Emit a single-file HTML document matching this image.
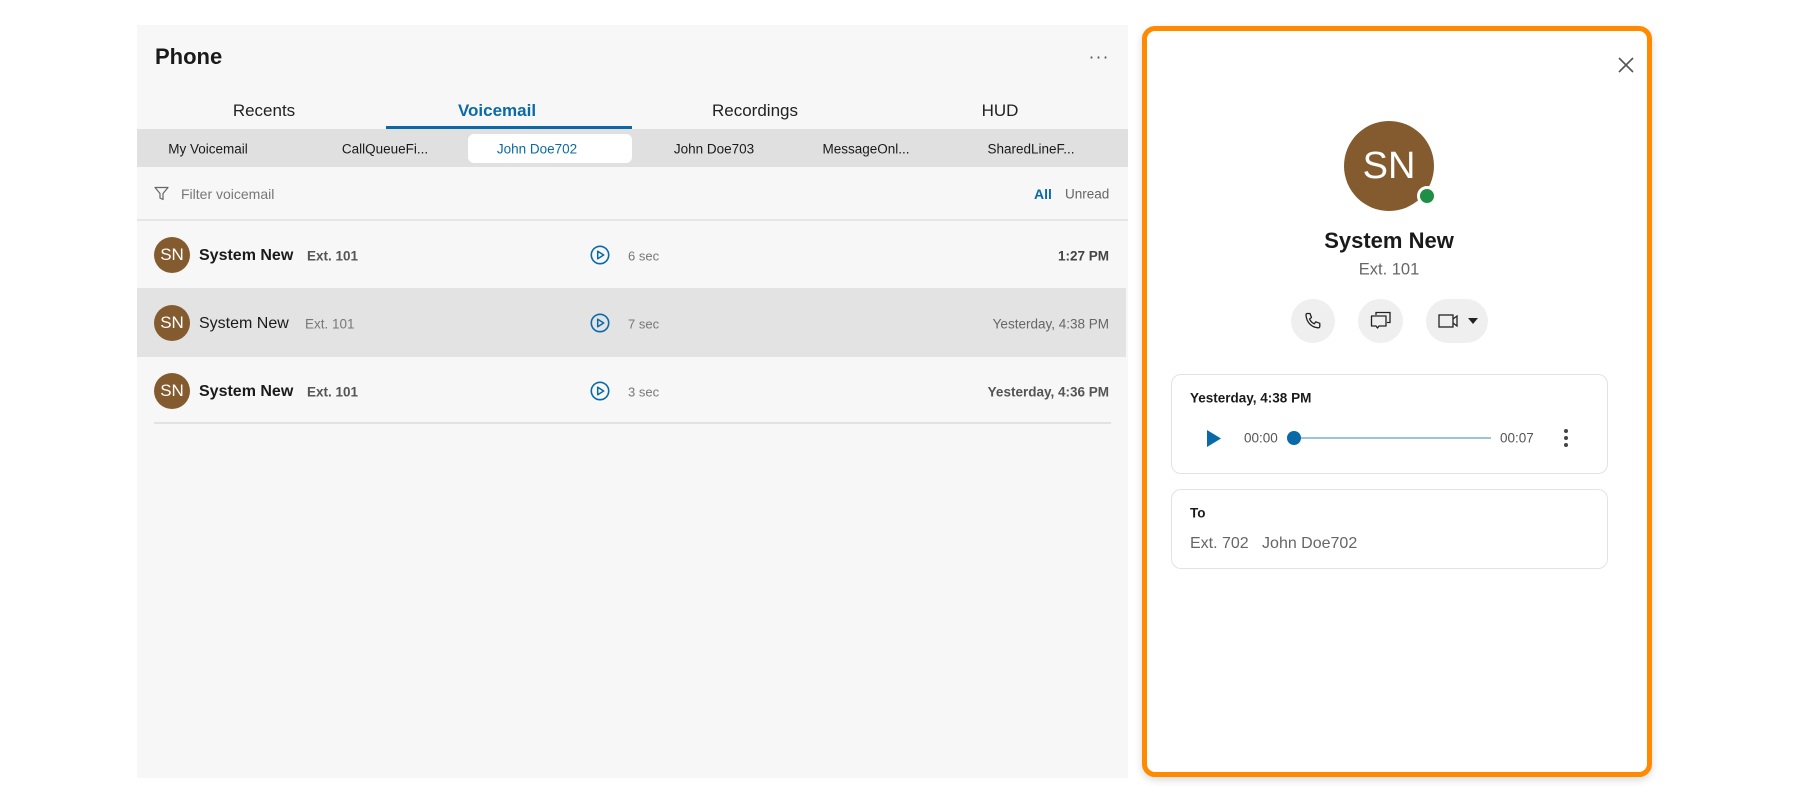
<!DOCTYPE html>
<html><head><meta charset="utf-8"><style>
*{margin:0;padding:0;box-sizing:border-box}
body{width:1800px;height:801px;background:#fff;font-family:"Liberation Sans",sans-serif;position:relative;overflow:hidden;color:#1a1a1a}
.a{position:absolute;white-space:nowrap}
.left{position:absolute;left:137px;top:25px;width:991px;height:753px;background:#f7f7f7}
.av{position:absolute;width:36px;height:36px;border-radius:50%;background:#845b2e;color:#fff;font-size:17px;text-align:center;line-height:36px}
.c{transform:translate(-50%,-50%)}
.vl{transform:translateY(-50%)}
</style></head><body>
<div class="left"></div>
<div class="a vl" style="left:155px;top:57px;font-size:22px;font-weight:bold">Phone</div>
<div class="a c" style="left:1099px;top:57px;font-size:18px;color:#555;letter-spacing:1px">···</div>
<div class="a c" style="left:264px;top:111px;font-size:17px;color:#222">Recents</div>
<div class="a c" style="left:497px;top:111px;font-size:17px;color:#0a6aa8;font-weight:bold">Voicemail</div>
<div class="a c" style="left:755px;top:111px;font-size:17px;color:#222">Recordings</div>
<div class="a c" style="left:1000px;top:111px;font-size:17px;color:#222">HUD</div>
<div class="a" style="left:386px;top:126px;width:246px;height:3px;background:#0a6aa8"></div>
<div class="a" style="left:137px;top:129px;width:991px;height:38px;background:#e0e0e0"></div>
<div class="a" style="left:468px;top:134px;width:164px;height:29px;background:#fff;border-radius:6px"></div>
<div class="a c" style="left:208px;top:149px;font-size:13.5px">My Voicemail</div>
<div class="a c" style="left:385px;top:149px;font-size:13.5px">CallQueueFi...</div>
<div class="a c" style="left:537px;top:149px;font-size:13.5px;color:#0a6aa8">John Doe702</div>
<div class="a c" style="left:714px;top:149px;font-size:13.5px">John Doe703</div>
<div class="a c" style="left:866px;top:149px;font-size:13.5px">MessageOnl...</div>
<div class="a c" style="left:1031px;top:149px;font-size:13.5px">SharedLineF...</div>
<svg class="a" style="left:154px;top:186px" width="15" height="15" viewBox="0 0 15 15"><path d="M1 1.5h13l-5 6v6l-3-1.5v-4.5z" fill="none" stroke="#666" stroke-width="1.2" stroke-linejoin="round"/></svg>
<div class="a vl" style="left:181px;top:194px;font-size:14px;color:#777">Filter voicemail</div>
<div class="a vl" style="left:1034px;top:194px;font-size:14px;color:#0a6aa8;font-weight:bold">All</div>
<div class="a vl" style="left:1065px;top:194px;font-size:13.5px;color:#666">Unread</div>
<div class="a" style="left:137px;top:219px;width:991px;height:2px;background:#e6e6e6"></div>
<div class="a" style="left:137px;top:288px;width:989px;height:69px;background:#e3e3e3"></div>
<div class="a" style="left:154px;top:422px;width:957px;height:2px;background:#e2e2e2"></div>

<div class="av c" style="left:172px;top:255px">SN</div>
<div class="a vl" style="left:199px;top:256px;font-size:16px;font-weight:bold">System New</div>
<div class="a vl" style="left:307px;top:256px;font-size:13.5px;font-weight:bold;color:#555">Ext. 101</div>
<div class="av c" style="left:172px;top:323px">SN</div>
<div class="a vl" style="left:199px;top:324px;font-size:16px">System New</div>
<div class="a vl" style="left:305px;top:324px;font-size:13.5px;color:#777">Ext. 101</div>
<div class="av c" style="left:172px;top:391px">SN</div>
<div class="a vl" style="left:199px;top:392px;font-size:16px;font-weight:bold">System New</div>
<div class="a vl" style="left:307px;top:392px;font-size:13.5px;font-weight:bold;color:#555">Ext. 101</div>

<svg class="a" style="left:590px;top:245px" width="20" height="20" viewBox="0 0 20 20"><circle cx="10" cy="10" r="8.7" fill="none" stroke="#0a6aa8" stroke-width="1.6"/><path d="M7.7 6.2v7.6l6-3.8z" fill="none" stroke="#0a6aa8" stroke-width="1.5" stroke-linejoin="round"/></svg>
<svg class="a" style="left:590px;top:313px" width="20" height="20" viewBox="0 0 20 20"><circle cx="10" cy="10" r="8.7" fill="none" stroke="#0a6aa8" stroke-width="1.6"/><path d="M7.7 6.2v7.6l6-3.8z" fill="none" stroke="#0a6aa8" stroke-width="1.5" stroke-linejoin="round"/></svg>
<svg class="a" style="left:590px;top:381px" width="20" height="20" viewBox="0 0 20 20"><circle cx="10" cy="10" r="8.7" fill="none" stroke="#0a6aa8" stroke-width="1.6"/><path d="M7.7 6.2v7.6l6-3.8z" fill="none" stroke="#0a6aa8" stroke-width="1.5" stroke-linejoin="round"/></svg>
<div class="a vl" style="left:628px;top:256px;font-size:13px;color:#777">6 sec</div>
<div class="a vl" style="left:628px;top:324px;font-size:13px;color:#777">7 sec</div>
<div class="a vl" style="left:628px;top:392px;font-size:13px;color:#777">3 sec</div>
<div class="a vl" style="right:691px;top:256px;font-size:13.5px;font-weight:bold;color:#444">1:27 PM</div>
<div class="a vl" style="right:691px;top:324px;font-size:13.5px;color:#666">Yesterday, 4:38 PM</div>
<div class="a vl" style="right:691px;top:392px;font-size:13.5px;font-weight:bold;color:#555">Yesterday, 4:36 PM</div>

<div class="a" style="left:1142px;top:26px;width:510px;height:751px;border:5px solid #ff8a00;border-radius:13px;background:#fff;box-shadow:0 3px 8px rgba(0,0,0,.15)"></div>
<svg class="a" style="left:1617px;top:56px" width="18" height="18" viewBox="0 0 18 18"><path d="M2 2l14 14M16 2L2 16" stroke="#555" stroke-width="1.6"/></svg>
<div class="a c" style="left:1389px;top:166px;width:90px;height:90px;border-radius:50%;background:#845b2e;color:#fff;font-size:38px;line-height:90px;text-align:center">SN</div>
<div class="a" style="left:1417px;top:186px;width:20px;height:20px;border-radius:50%;background:#1f8f45;border:3px solid #fff"></div>
<div class="a c" style="left:1389px;top:241px;font-size:22px;font-weight:bold">System New</div>
<div class="a c" style="left:1389px;top:270px;font-size:16.5px;color:#666">Ext. 101</div>
<div class="a" style="left:1291px;top:299px;width:44px;height:44px;border-radius:50%;background:#efefef"></div>
<div class="a" style="left:1358px;top:299px;width:45px;height:44px;border-radius:50%;background:#efefef"></div>
<div class="a" style="left:1426px;top:299px;width:62px;height:44px;border-radius:22px;background:#efefef"></div>
<svg class="a" style="left:1303px;top:311px" width="20" height="20" viewBox="0 0 20 20"><path d="M4 2.5l3 0 1.5 4-2 1.5c1 2.2 2.6 3.8 4.8 4.8l1.5-2 4 1.5v3c0 1-.8 1.6-1.8 1.5C8.5 16.3 3.7 11.5 3 4.3 2.9 3.3 3.2 2.5 4 2.5z" fill="none" stroke="#222" stroke-width="1.3" stroke-linejoin="round"/></svg>
<svg class="a" style="left:1370px;top:311px" width="22" height="20" viewBox="0 0 22 20"><path d="M6 4V1.5h14v10h-3" fill="none" stroke="#222" stroke-width="1.3"/><path d="M1.5 5h14.5v10H9l-1.5 2-1.5-2H1.5z" fill="none" stroke="#222" stroke-width="1.3" stroke-linejoin="round"/></svg>
<svg class="a" style="left:1438px;top:311px" width="22" height="20" viewBox="0 0 22 20"><rect x="1" y="4" width="14" height="12" fill="none" stroke="#222" stroke-width="1.3"/><path d="M15 8l4-3v10l-4-3" fill="none" stroke="#222" stroke-width="1.3"/></svg>
<svg class="a" style="left:1468px;top:318px" width="10" height="7" viewBox="0 0 10 7"><path d="M0 0h10L5 6z" fill="#222"/></svg>

<div class="a" style="left:1171px;top:374px;width:437px;height:100px;border:1.5px solid #e3e3e3;border-radius:10px"></div>
<div class="a vl" style="left:1190px;top:398px;font-size:13.5px;font-weight:bold">Yesterday, 4:38 PM</div>
<svg class="a" style="left:1206px;top:430px" width="16" height="17" viewBox="0 0 16 17"><path d="M1 0l14 8.5L1 17z" fill="#0a6aa8"/></svg>
<div class="a vl" style="left:1244px;top:438px;font-size:13.5px;color:#555">00:00</div>
<div class="a" style="left:1294px;top:437px;width:197px;height:2px;background:#9ec3dd"></div>
<div class="a c" style="left:1294px;top:438px;width:14px;height:14px;border-radius:50%;background:#0a6aa8"></div>
<div class="a vl" style="left:1500px;top:438px;font-size:13.5px;color:#555">00:07</div>
<div class="a" style="left:1564px;top:429px;width:4px;height:4px;border-radius:50%;background:#444;box-shadow:0 7px 0 #444,0 14px 0 #444"></div>

<div class="a" style="left:1171px;top:489px;width:437px;height:80px;border:1.5px solid #e3e3e3;border-radius:10px"></div>
<div class="a vl" style="left:1190px;top:513px;font-size:13.5px;font-weight:bold">To</div>
<div class="a vl" style="left:1190px;top:544px;font-size:16px;color:#666">Ext. 702&nbsp;&nbsp; John Doe702</div>
</body></html>
